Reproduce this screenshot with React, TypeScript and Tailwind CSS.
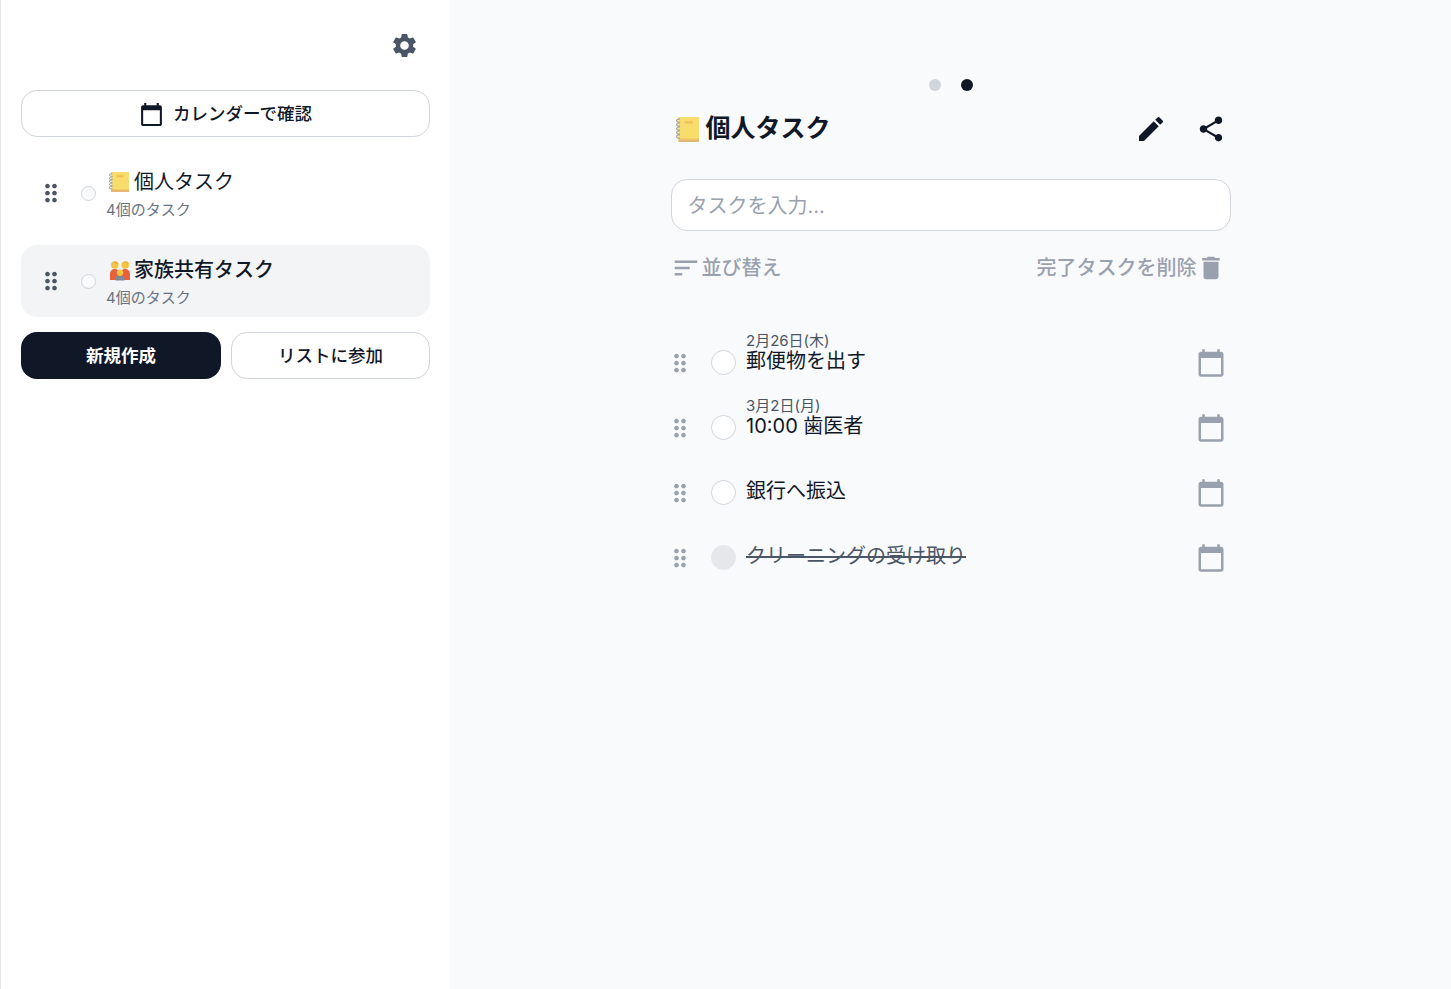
import { MdSettings, MdEdit, MdShare, MdDragIndicator, MdCalendarToday, MdSort, MdDelete } from "react-icons/md";

const font = "font-['Inter','Noto_Sans_CJK_JP',sans-serif]";

function Notebook({ className }: { className: string }) {
  return (
    <svg viewBox="1 2 20 19" preserveAspectRatio="none" className={className}>
      <path d="M3 2h17a1 1 0 0 1 1 1v16H3z" fill="#f8dc6c" />
      <path d="M3 19h18v1.500a.5.5 0 0 1-.5.5H3z" fill="#e3b778" />
      <path d="M3 18.400h18v.8H3z" fill="#efc453" />
      <rect x="8.500" y="5" width="7" height="2" fill="#f0c25c" />
      <g fill="none" stroke="#a8a8a8" strokeWidth="1">
        <path d="M4.500 3.500c-2 0-3 .6-3 1.400s1 1.200 3 1.100" />
        <path d="M4.500 6.500c-2 0-3 .6-3 1.400s1 1.200 3 1.100" />
        <path d="M4.500 9.500c-2 0-3 .6-3 1.400s1 1.200 3 1.100" />
        <path d="M4.500 12.500c-2 0-3 .6-3 1.400s1 1.200 3 1.100" />
        <path d="M4.500 15.500c-2 0-3 .6-3 1.400s1 1.200 3 1.100" />
      </g>
    </svg>
  );
}

function Family({ className }: { className: string }) {
  return (
    <svg viewBox="0 0 22 22" className={className}>
      <path d="M1 21v-6c0-3 2-5 4.800-5S10.500 12 10.500 15v6z" fill="#e8603c" />
      <path d="M11.500 21v-6c0-3 2-5 4.800-5s4.700 2 4.700 5v6z" fill="#e8603c" />
      <circle cx="5.800" cy="6" r="3.800" fill="#f6c445" />
      <circle cx="16.200" cy="6" r="3.800" fill="#f6c445" />
      <path d="M4.500 3.500C5.500 2 9 2.300 9.500 5 8 4.500 6 4.500 4.500 3.500z" fill="#eeb23a" />
      <path d="M15 3.500c1-1.500 4.500-1.200 5 1.500-1.500-.5-3.500-.5-5-1.500z" fill="#eeb23a" />
      <path d="M6.500 21.500v-2c0-2 2-3 4.500-3s4.500 1 4.500 3v2z" fill="#7e8a9c" />
      <circle cx="11" cy="13.800" r="3.200" fill="#f6c445" />
    </svg>
  );
}

function ListRow({ icon, title, active }: { icon: React.ReactNode; title: string; active?: boolean }) {
  return (
    <div className={`flex h-[72px] items-center rounded-2xl pl-4 ${active ? "bg-gray-100" : ""}`}>
      <MdDragIndicator size={28} className="shrink-0 text-gray-600" />
      <span className="ml-[16px] h-[15px] w-[15px] shrink-0 rounded-full border border-gray-300 bg-gray-50" />
      <div className="ml-[10px] flex flex-col pt-[2px]">
        <span className={`flex items-center text-[20px] leading-[28px] text-gray-900 ${active ? "font-medium" : ""}`}>
          {icon}
          {title}
        </span>
        <span className="mt-[4px] text-[15px] leading-[20px] text-gray-500">4個のタスク</span>
      </div>
    </div>
  );
}

function TaskRow({ date, title, done }: { date?: string; title: string; done?: boolean }) {
  return (
    <div className="flex h-[65px] items-center">
      <MdDragIndicator size={28} className="ml-[-5px] shrink-0 text-gray-400" />
      <span className={`ml-[17px] h-[25px] w-[25px] shrink-0 rounded-full border ${done ? "border-gray-200 bg-gray-200" : "border-gray-300 bg-white"}`} />
      <div className="ml-[10.5px] flex flex-1 flex-col self-start pt-[1px]">
        <div className="h-[20px]">
          {date && <span className="block text-[15px] leading-[20px] text-gray-600">{date}</span>}
        </div>
        <span className={`mt-[-4.500px] text-[20px] leading-[28px] ${done ? "self-start text-gray-600 line-through" : "text-gray-900"}`}>{title}</span>
      </div>
      <MdCalendarToday size={30} className="mr-[5px] shrink-0 text-gray-400" />
    </div>
  );
}

export default function App() {
  return (
    <div className={`${font} flex min-h-[989px] bg-gray-50`}>
      <aside className="flex w-[450px] shrink-0 flex-col border-l border-gray-200 bg-white px-5">
        <div className="flex h-[90px] items-start justify-end pr-[11px] pt-[31px]">
          <MdSettings size={29} className="text-gray-600" />
        </div>
        <button className="flex h-[47px] items-center justify-center gap-[9px] rounded-2xl border border-gray-300 bg-white pt-[1px] text-[17.5px] font-medium text-gray-900">
          <MdCalendarToday size={25} />
          カレンダーで確認
        </button>
        <div className="mt-[20px] flex flex-col gap-[16px]">
          <ListRow icon={<Notebook className="ml-[3px] mr-[5px] h-[20px] w-[20px] shrink-0" />} title="個人タスク" />
          <ListRow icon={<Family className="ml-[3px] mr-[3px] h-[22px] w-[22px] shrink-0" />} title="家族共有タスク" active />
        </div>
        <div className="mt-[15px] flex gap-[10px]">
          <button className="h-[47px] w-[200px] rounded-2xl bg-gray-900 pt-[1px] text-[17.5px] font-bold text-white">新規作成</button>
          <button className="h-[47px] flex-1 rounded-2xl border border-gray-300 bg-white pt-[1px] text-[17.5px] font-medium text-gray-900">リストに参加</button>
        </div>
      </aside>
      <main className="flex flex-1 justify-center">
        <div className="w-[560px] pt-[79px]">
          <div className="flex justify-center gap-[20px]">
            <span className="h-3 w-3 rounded-full bg-gray-300" />
            <span className="h-3 w-3 rounded-full bg-gray-900" />
          </div>
          <div className="mt-[16px] flex h-[44px] items-center justify-between">
            <h1 className="flex items-center pl-[5px] text-[25px] font-semibold text-gray-900">
              <Notebook className="mr-[7px] h-[25px] w-[23px] shrink-0" />
              個人タスク
            </h1>
            <div className="flex items-center gap-[29px] pr-[5px]">
              <MdEdit size={32} className="text-gray-900" />
              <MdShare size={30} className="text-gray-900" />
            </div>
          </div>
          <div className="mt-[28px] flex h-[52px] items-center rounded-2xl border border-gray-300 bg-white px-4 pt-[1px] text-[20px] text-gray-400">
            タスクを入力...
          </div>
          <div className="mt-[21px] flex h-[32px] items-center justify-between pr-[5px] text-[20px] font-medium text-gray-400">
            <div className="flex items-center gap-[1px]">
              <MdSort size={30} />
              並び替え
            </div>
            <div className="flex items-center">
              <span>完了タスクを削除</span>
              <MdDelete size={30} className="-ml-px" />
            </div>
          </div>
          <div className="mt-[46px] flex flex-col">
            <TaskRow date="2月26日(木)" title="郵便物を出す" />
            <TaskRow date="3月2日(月)" title="10:00 歯医者" />
            <TaskRow title="銀行へ振込" />
            <TaskRow title="クリーニングの受け取り" done />
          </div>
        </div>
      </main>
    </div>
  );
}
